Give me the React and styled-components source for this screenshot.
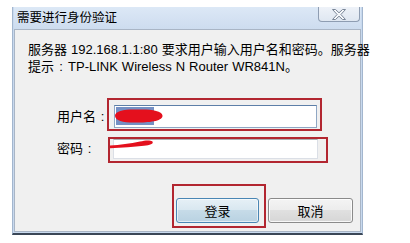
import React from 'react';
import styled, { createGlobalStyle } from 'styled-components';

const Global = createGlobalStyle`
  html, body { margin: 0; padding: 0; background: #fff; }
  body { font-family: "Liberation Sans", "Noto Sans CJK SC", sans-serif; color: #000; }
  * { box-sizing: border-box; }
`;

const Page = styled.div`
  width: 410px;
  height: 243px;
  padding: 7px 0 0 12px;
  background: #fff;
`;

const Window = styled.div`
  width: 351px;
  height: 228px;
  background: #c8d9ee;
  border-left: 1px solid #a3b6ce;
  border-right: 1px solid #a3b6ce;
  border-bottom: 2px solid #3a4656;
  padding: 0 1px 1px;
  display: flex;
  flex-direction: column;
`;

const TitleBar = styled.div`
  height: 22px;
  flex: none;
  display: flex;
  justify-content: space-between;
  align-items: flex-start;
  background: linear-gradient(#dce8f6, #cddcef);
`;

const Title = styled.div`
  font-size: 12.5px;
  line-height: 20px;
  padding: 1px 0 0 3px;
`;

const CloseButton = styled.div`
  width: 42px;
  height: 15px;
  margin-right: 1px;
  border: 1px solid #8e9db2;
  border-top: none;
  border-radius: 0 0 4px 4px;
  background: linear-gradient(#eef2f8, #dfe7f1);
  display: flex;
  align-items: center;
  justify-content: center;
`;

const Panel = styled.div`
  flex: 1;
  background: #f0f0f0;
  border: 1px solid #a9b5c5;
  display: flex;
  flex-direction: column;
`;

const Message = styled.div`
  font-size: 13px;
  line-height: 17px;
  padding: 11px 0 0 13px;
  white-space: nowrap;
  word-spacing: 0.4px;
`;

const Colon = styled.span`
  display: inline-block;
  width: ${p => p.$w || 13}px;
  text-align: center;
  font-family: "Liberation Sans", sans-serif;
`;

const Form = styled.div`
  margin-top: 23px;
  display: flex;
  flex-direction: column;
  gap: 6px;
`;

const Row = styled.div`
  display: flex;
  align-items: center;
  padding-left: 42px;
`;

const Label = styled.div`
  width: ${p => p.$w}px;
  font-size: 13px;
  line-height: 16px;
  margin-top: ${p => p.$dy}px;
  white-space: nowrap;
`;

const Marker = styled.div`
  position: relative;
  width: ${p => p.$w}px;
  height: ${p => p.$h}px;
  border: 2px solid #b22630;
  padding: ${p => p.$pad};
  flex: none;
`;

const Field = styled.div`
  position: relative;
  width: ${p => p.$w}px;
  height: ${p => p.$h}px;
  background: #fff;
  border: 1px solid ${p => (p.$focus ? '#8fa7c4' : '#dbdfe6')};
  border-top-color: ${p => (p.$focus ? '#5d7fa8' : '#abadb3')};
`;

const Selection = styled.div`
  position: absolute;
  left: 1px;
  top: 1px;
  width: 38px;
  height: 18px;
  background: #7590c4;
`;

const Scribble = styled.svg`
  position: absolute;
  left: ${p => p.$x}px;
  top: ${p => p.$y}px;
  overflow: visible;
`;

const ButtonRow = styled.div`
  margin-top: 21px;
  display: flex;
  justify-content: flex-end;
  align-items: flex-start;
  padding-right: 7px;
`;

const Button = styled.div`
  width: ${p => p.$w}px;
  height: 25px;
  font-size: 13px;
  display: flex;
  align-items: center;
  justify-content: center;
  border-radius: 3px;
  margin-top: ${p => p.$mt || 0}px;
  margin-left: ${p => p.$ml || 0}px;
  border: 1px solid ${p => (p.$primary ? '#4a86b4' : '#8a8a8a')};
  background: ${p =>
    p.$primary
      ? 'linear-gradient(#e6f0f6, #d8e7f0 50%, #c6dbe8 50%, #b9d2e2)'
      : 'linear-gradient(#f4f4f4, #ececec 50%, #e0e0e0 50%, #d6d6d6)'};
  box-shadow: inset 0 0 0 1px ${p => (p.$primary ? 'rgba(255,255,255,0.6)' : 'rgba(255,255,255,0.8)')};
`;

export default function App() {
  return (
    <>
      <Global />
      <Page>
        <Window>
          <TitleBar>
            <Title>需要进行身份验证</Title>
            <CloseButton>
              <svg width="14" height="11" viewBox="-0.5 -0.5 14 11">
                <polygon
                  points="0,0 3,0 6.5,3.3 10,0 13,0 8.4,5 13,10 10,10 6.5,6.7 3,10 0,10 4.6,5"
                  fill="#f6f8fb"
                  stroke="#7b8798"
                  strokeWidth="1"
                  strokeLinejoin="round"
                />
              </svg>
            </CloseButton>
          </TitleBar>
          <Panel>
            <Message>
              服务器 192.168.1.1:80 要求用户输入用户名和密码。服务器
              <br />
              提示<Colon $w={14}>:</Colon>TP-LINK Wireless N Router WR841N。
            </Message>
            <Form>
              <Row>
                <Label $w={50} $dy={4}>用户名<Colon>:</Colon></Label>
                <Marker $w={215} $h={33} $pad="5px 0 0 5px">
                  <Field $w={203} $h={23} $focus>
                    <Selection />
                    <Scribble $x={-1} $y={1} width="50" height="17" viewBox="0 0 50 17">
                      <path
                        d="M1 9 C0.5 3.5, 12 2, 24 2.5 C36 2, 48 3.5, 48.5 8.5 C49 13.5, 38 15.5, 24 15.5 C10 16, 1.5 14, 1 9 Z"
                        fill="#e4101d"
                      />
                    </Scribble>
                  </Field>
                </Marker>
              </Row>
              <Row>
                <Label $w={51} $dy={-2}>密码<Colon>:</Colon></Label>
                <Marker $w={220} $h={26} $pad="0 0 0 3px">
                  <Field $w={205} $h={20} />
                  <Scribble $x={0} $y={0} width="44" height="10" viewBox="0 0 44 10">
                    <path
                      d="M0 6.5 C10 6, 20 4.5, 30 2.5 C35 1.3, 40 0.8, 42.5 2.5 C43.8 5, 40 6.2, 34 6.8 C24 7.8, 12 9, 0 9.3 Z"
                      fill="#e4101d"
                    />
                  </Scribble>
                </Marker>
              </Row>
            </Form>
            <ButtonRow>
              <Marker $w={94} $h={44} $pad="12px 0 0 2px">
                <Button $w={83} $primary>登录</Button>
              </Marker>
              <Button $w={85} $mt={14} $ml={2}>取消</Button>
            </ButtonRow>
          </Panel>
        </Window>
      </Page>
    </>
  );
}
